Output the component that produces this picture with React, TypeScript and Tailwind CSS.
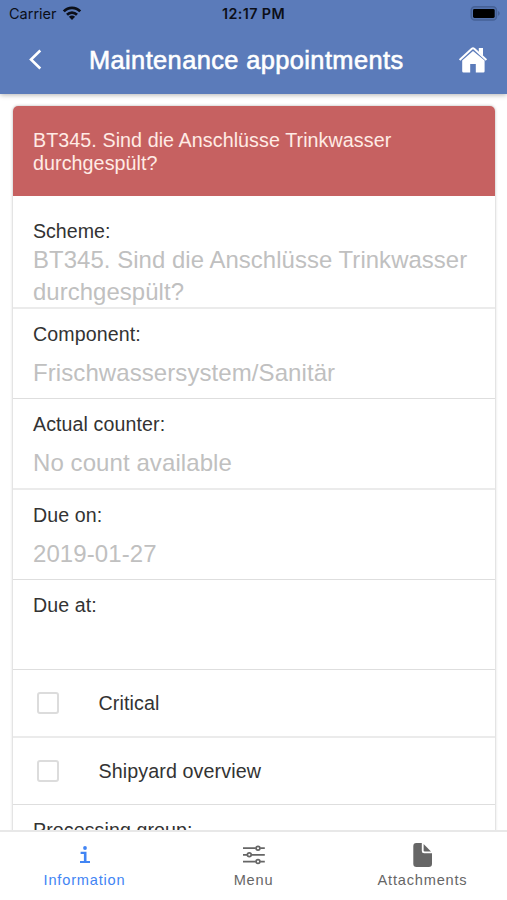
import React from "react";

function WifiIcon() {
  return (
    <svg width="20" height="16" viewBox="0 0 20 16" fill="none" stroke="#0c0f18" strokeWidth="2.7">
      <path d="M1.8 5.4C6.3 .6 13.7 .6 18.2 5.4" />
      <path d="M5 8.8C7.8 5.9 12.2 5.9 15 8.8" />
      <path d="M10 14L6.9 10.8C8.6 9.2 11.4 9.2 13.1 10.8Z" fill="#0c0f18" stroke="none" />
    </svg>
  );
}

function BatteryIcon() {
  return (
    <svg width="31" height="16" viewBox="0 0 31 16">
      <rect x="1.2" y=".8" width="25.3" height="13.2" rx="3.6" fill="#5473ae" stroke="#466196" strokeWidth="1.5" />
      <rect x="3" y="3" width="21.7" height="9" rx="1.4" fill="#000" />
      <path d="M28 5.1C30.3 6 30.3 9 28 9.9Z" fill="#466196" />
    </svg>
  );
}

function HomeIcon() {
  return (
    <svg width="30" height="28" viewBox="0 0 30 28" fill="#fff">
      <path d="M15 5L4.2 14.6V25.2Q4.2 26.6 5.6 26.6H12.2V18H17.8V26.6H25.4Q26.6 26.6 26.6 25.2V14.6Z" />
      <path d="M1.6 14L13.8 2.8Q15 1.8 16.2 2.8L28.4 14" fill="none" stroke="#fff" strokeWidth="2" />
      <path d="M20.8 2H25V10L20.8 6.2Z" />
    </svg>
  );
}

function SlidersIcon() {
  return (
    <svg width="24" height="20" viewBox="0 0 24 20" fill="none" stroke="#666" strokeWidth="1.7">
      <path d="M1 3.2H13.8M18.2 3.2H22.8M1 9.8H5.2M9.4 9.8H22.8M1 16.6H13.8M18.2 16.6H22.8" />
      <circle cx="16" cy="3.2" r="1.9" />
      <circle cx="7.3" cy="9.8" r="1.9" />
      <circle cx="16" cy="16.6" r="1.9" />
    </svg>
  );
}

function DocumentIcon() {
  return (
    <svg width="20" height="24" viewBox="0 0 20 24" fill="#666">
      <path d="M3.3 0H8.8V8Q8.8 10.3 11.1 10.3H19V20.8Q19 24 15.8 24H3.5Q.3 24 .3 20.8V3.2Q.3 0 3.3 0Z" />
      <path d="M10.6 .9L18 8.5H11.8Q10.6 8.5 10.6 7.3Z" />
    </svg>
  );
}

function InfoIcon() {
  return (
    <svg width="12" height="18" viewBox="0 0 12 18" fill="#4285f4">
      <circle cx="6" cy="2" r="1.9" />
      <path d="M1.6 5.8H7.5V14.9H11V17.1H1V14.9H4.9V8H1.6Z" />
    </svg>
  );
}

function Field({ label, value, line }: { label: string; value?: string; line: string }) {
  return (
    <div className={`shrink-0 pl-5 pt-[13px] ${line}`}>
      <div className="text-[19.6px] leading-6 tracking-[0.1px] text-[#333]">{label}</div>
      <div className="mt-[11px] text-[24px] leading-8 tracking-[0.08px] text-[#c0c0c0]">{value}</div>
    </div>
  );
}

function CheckRow({ label, line }: { label: string; line: string }) {
  return (
    <div className={`flex shrink-0 items-center pl-6 ${line}`}>
      <span className="size-[22px] rounded-[3px] border-2 border-[#dcdcdc]" />
      <span className="ml-[39.5px] text-[19.7px] leading-6 tracking-[0.1px] text-[#333]">{label}</span>
    </div>
  );
}

export default function App() {
  return (
    <div className="flex h-[900px] w-[507px] flex-col overflow-hidden bg-white font-['Liberation_Sans',Arial,sans-serif]">
      <header className="z-10 h-[94px] shrink-0 bg-[#5b7bba] shadow-[0_1px_5px_rgba(0,0,0,0.3)]">
        <div className="grid h-7 grid-cols-3 items-center pl-[9px] pr-[6px] text-[#0c0f18]">
          <div className="flex items-center gap-[5px] font-['Inter',sans-serif] text-[14.5px]">
            <span>Carrier</span>
            <WifiIcon />
          </div>
          <div className="-ml-[3px] text-center font-['Inter',sans-serif] text-[14.3px] font-semibold tracking-[0.4px]">12:17 PM</div>
          <div className="flex justify-end"><BatteryIcon /></div>
        </div>
        <div className="flex h-[64px] items-center pl-[28px] pr-[19px]">
          <svg width="15" height="22" viewBox="0 0 15 22" fill="none" stroke="#fff" strokeWidth="2.6">
            <path d="M12.3 1.5L3 10.5L12.3 19.5" />
          </svg>
          <h1 className="ml-[46px] flex-1 whitespace-nowrap text-[25.4px] tracking-[0.4px] text-white [-webkit-text-stroke:0.6px_white]">Maintenance appointments</h1>
          <HomeIcon />
        </div>
      </header>
      <main className="min-h-0 flex-1 overflow-hidden pl-[13px] pr-3 pt-3">
        <div className="flex flex-col rounded-[5px] shadow-[0_0_3px_rgba(0,0,0,0.3)]">
          <div className="h-[90px] shrink-0 rounded-t-[5px] bg-[#c66161] pl-5 pt-[22.5px] text-[19.7px] leading-[23.5px] tracking-[0.07px] text-[#ffebe5]">
            BT345. Sind die Anschlüsse Trinkwasser<br />durchgespült?
          </div>
          <div className="h-[113px] shrink-0 border-b-2 border-[#ebebeb] pl-5 pt-[23px]">
            <div className="text-[19.6px] leading-6 text-[#333]">Scheme:</div>
            <div className="mt-[1px] text-[23.9px] leading-8 tracking-[0.07px] text-[#c0c0c0]">BT345. Sind die Anschlüsse Trinkwasser<br />durchgespült?</div>
          </div>
          <Field label="Component:" value="Frischwassersystem/Sanitär" line="h-[90px] border-b border-[#dedede]" />
          <Field label="Actual counter:" value="No count available" line="h-[91px] border-b-2 border-[#ebebeb]" />
          <Field label="Due on:" value="2019-01-27" line="h-[90px] border-b border-[#dedede]" />
          <Field label="Due at:" line="h-[90px] border-b border-[#dedede]" />
          <CheckRow label="Critical" line="h-[68px] border-b-2 border-[#ebebeb]" />
          <CheckRow label="Shipyard overview" line="h-[67px] border-b border-[#dedede]" />
          <Field label="Processing group:" line="h-[90px] border-b border-[#dedede]" />
        </div>
      </main>
      <nav className="z-10 grid h-[70px] shrink-0 grid-cols-3 border-t-2 border-[#e8e8e8] bg-white text-[14.6px] tracking-[0.8px] text-[#666]">
        <div className="flex flex-col items-center pt-[10px] text-[#4285f4]">
          <div className="flex h-[25px] items-center"><InfoIcon /></div>
          <span className="mt-[3px] leading-5">Information</span>
        </div>
        <div className="flex flex-col items-center pt-[10px]">
          <div className="flex h-[25px] items-center"><SlidersIcon /></div>
          <span className="mt-[3px] leading-5">Menu</span>
        </div>
        <div className="flex flex-col items-center pt-[10px]">
          <div className="flex h-[25px] items-center"><DocumentIcon /></div>
          <span className="mt-[3px] leading-5">Attachments</span>
        </div>
      </nav>
    </div>
  );
}
